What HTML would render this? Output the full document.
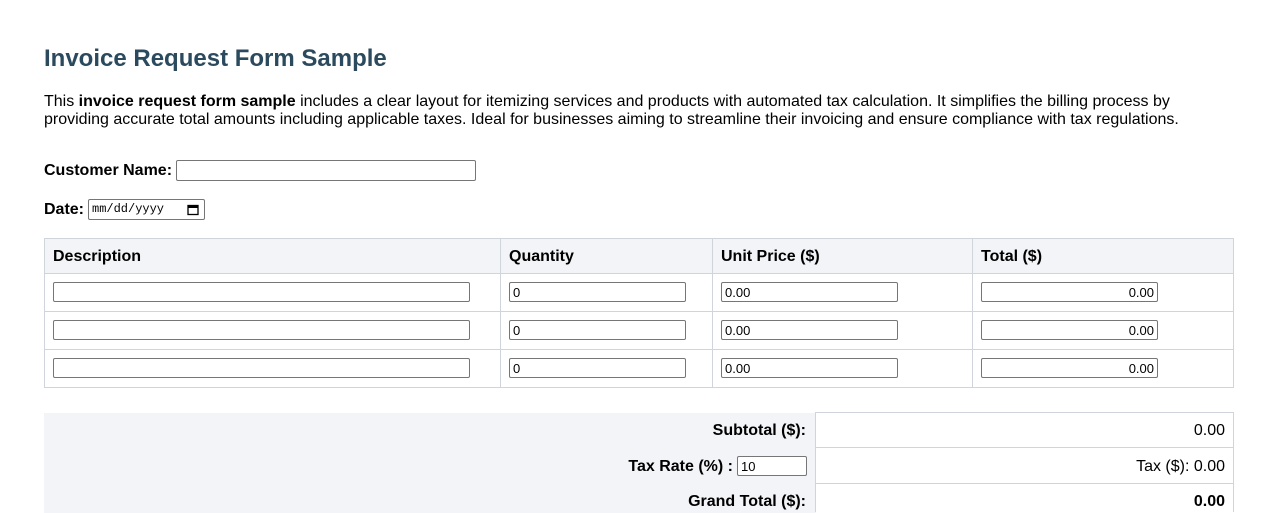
<!DOCTYPE html>
<html><head><style>
*{box-sizing:border-box}
body{margin:0;width:1278px;height:501px;overflow:hidden;background:#fff;font-family:"Liberation Sans",Arial,sans-serif;font-size:16px;color:#000;position:relative}
.a{position:absolute}
.inp{position:absolute;border:1px solid #767676;border-radius:2px;background:#fff;height:20px;font-size:13px;line-height:18px;padding:0 3px}
.b{font-weight:bold}
.hl{position:absolute;background:#d0d5dc}
</style></head><body>
<div class="a b" style="left:44px;top:45px;font-size:24px;color:#2c4a5e">Invoice Request Form Sample</div>
<div class="a" style="left:44px;top:93px;width:1150px;line-height:18px">This <b>invoice request form sample</b> includes a clear layout for itemizing services and products with automated tax calculation. It simplifies the billing process by providing accurate total amounts including applicable taxes. Ideal for businesses aiming to streamline their invoicing and ensure compliance with tax regulations.</div>
<div class="a b" style="left:44px;top:162px">Customer Name:</div>
<div class="inp" style="left:176px;top:160px;width:300px;height:21px"></div>
<div class="a b" style="left:44px;top:201px">Date:</div>
<div class="inp" style="left:88px;top:199px;width:117px;height:21px;font-family:'Liberation Mono',monospace;font-size:12px;line-height:19px">mm/dd/yyyy
<svg class="a" style="left:98px;top:4px" width="12" height="12" viewBox="0 0 12 12"><rect x="1" y="1.5" width="10" height="9" fill="none" stroke="#000" stroke-width="1.3"/><rect x="1" y="1.5" width="10" height="2.5" fill="#000"/></svg></div>

<div class="a" style="left:44px;top:238px;width:1190px;height:36px;background:#f2f4f7"></div>
<div class="hl" style="left:44px;top:238px;width:1190px;height:1px"></div>
<div class="hl" style="left:44px;top:273px;width:1190px;height:1px"></div>
<div class="hl" style="left:44px;top:311px;width:1190px;height:1px"></div>
<div class="hl" style="left:44px;top:349px;width:1190px;height:1px"></div>
<div class="hl" style="left:44px;top:387px;width:1190px;height:1px"></div>
<div class="hl" style="left:44px;top:238px;width:1px;height:150px"></div>
<div class="hl" style="left:500px;top:238px;width:1px;height:150px"></div>
<div class="hl" style="left:712px;top:238px;width:1px;height:150px"></div>
<div class="hl" style="left:972px;top:238px;width:1px;height:150px"></div>
<div class="hl" style="left:1233px;top:238px;width:1px;height:150px"></div>
<div class="a b" style="left:53px;top:248px">Description</div>
<div class="a b" style="left:509px;top:248px">Quantity</div>
<div class="a b" style="left:721px;top:248px">Unit Price ($)</div>
<div class="a b" style="left:981px;top:248px">Total ($)</div>

<div class="inp" style="left:53px;top:282px;width:417px"></div>
<div class="inp" style="left:509px;top:282px;width:177px;padding-top:1px">0</div>
<div class="inp" style="left:721px;top:282px;width:177px;padding-top:1px">0.00</div>
<div class="inp" style="left:981px;top:282px;width:177px;text-align:right;padding-top:1px">0.00</div>
<div class="inp" style="left:53px;top:320px;width:417px"></div>
<div class="inp" style="left:509px;top:320px;width:177px;padding-top:1px">0</div>
<div class="inp" style="left:721px;top:320px;width:177px;padding-top:1px">0.00</div>
<div class="inp" style="left:981px;top:320px;width:177px;text-align:right;padding-top:1px">0.00</div>
<div class="inp" style="left:53px;top:358px;width:417px"></div>
<div class="inp" style="left:509px;top:358px;width:177px;padding-top:1px">0</div>
<div class="inp" style="left:721px;top:358px;width:177px;padding-top:1px">0.00</div>
<div class="inp" style="left:981px;top:358px;width:177px;text-align:right;padding-top:1px">0.00</div>

<div class="a" style="left:44px;top:413px;width:772px;height:100px;background:#f2f4f7"></div>
<div class="hl" style="left:815px;top:412px;width:419px;height:1px"></div>
<div class="hl" style="left:815px;top:447px;width:419px;height:1px"></div>
<div class="hl" style="left:815px;top:483px;width:419px;height:1px"></div>
<div class="hl" style="left:815px;top:412px;width:1px;height:100px"></div>
<div class="hl" style="left:1233px;top:412px;width:1px;height:100px"></div>
<div class="a b" style="right:472px;top:422px">Subtotal ($):</div>
<div class="a" style="right:53px;top:422px">0.00</div>
<div class="a b" style="right:545px;top:458px">Tax Rate (%) :</div>
<div class="inp" style="left:737px;top:456px;width:70px;padding-top:1px">10</div>
<div class="a" style="right:53px;top:458px">Tax ($): 0.00</div>
<div class="a b" style="right:472px;top:493px">Grand Total ($):</div>
<div class="a b" style="right:53px;top:493px">0.00</div>
</body></html>
